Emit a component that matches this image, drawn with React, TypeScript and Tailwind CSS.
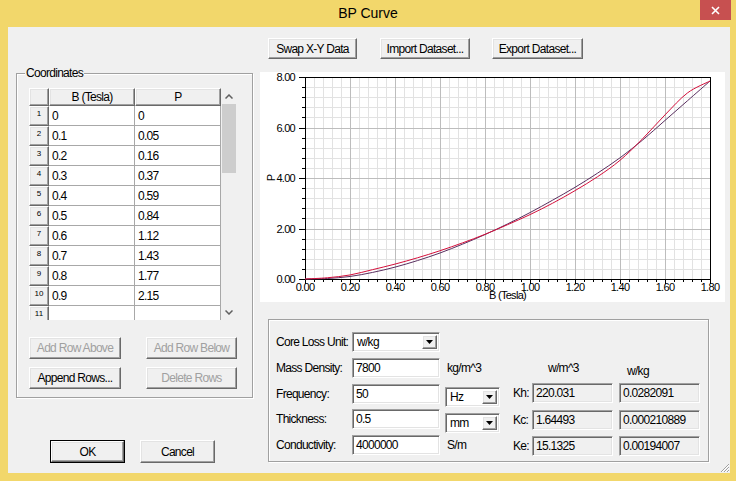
import React from "react";

const raised =
  "border border-t-white border-l-white border-r-[#696969] border-b-[#696969] shadow-[inset_-1px_-1px_0_#a0a0a0,inset_1px_1px_0_#e3e3e3]";
const sunken =
  "border border-t-[#a0a0a0] border-l-[#a0a0a0] border-r-white border-b-white shadow-[inset_1px_1px_0_#696969,inset_-1px_-1px_0_#e3e3e3]";

const ROWS: [string, string][] = [
  ["0", "0"],
  ["0.1", "0.05"],
  ["0.2", "0.16"],
  ["0.3", "0.37"],
  ["0.4", "0.59"],
  ["0.5", "0.84"],
  ["0.6", "1.12"],
  ["0.7", "1.43"],
  ["0.8", "1.77"],
  ["0.9", "2.15"],
  ["", ""],
];

const DATA = [0, 0.05, 0.16, 0.37, 0.59, 0.84, 1.12, 1.43, 1.77, 2.15, 2.55, 3.0, 3.5, 4.05, 4.7, 5.55, 6.5, 7.37, 7.84];
const FIT = [0, 0.02, 0.1, 0.26, 0.47, 0.73, 1.03, 1.38, 1.76, 2.18, 2.63, 3.12, 3.63, 4.19, 4.8, 5.5, 6.28, 7.06, 7.84];

const Button: React.FC<{ label: string; className: string; disabled?: boolean }> = ({ label, className, disabled }) => (
  <div
    className={`${raised} ${className} flex items-center justify-center bg-[#f0f0f0] ${
      disabled ? "text-[#a0a0a0]" : "text-black"
    }`}
  >
    {label}
  </div>
);

const Select: React.FC<{ value: string; className: string }> = ({ value, className }) => (
  <div className={`${sunken} ${className} bg-white flex items-center p-[2px]`}>
    <span className="flex-1 pl-[2px]">{value}</span>
    <div className={`${raised} w-[15px] h-full bg-[#f0f0f0] flex items-center justify-center`}>
      <svg width="7" height="4" viewBox="0 0 7 4">
        <path d="M0 0h7L3.5 4z" fill="#000" />
      </svg>
    </div>
  </div>
);

const Field: React.FC<{ value: string; className: string; readOnly?: boolean }> = ({ value, className, readOnly }) => (
  <div className={`${sunken} ${className} ${readOnly ? "bg-[#f0f0f0]" : "bg-white"} flex items-center pl-[3px]`}>
    {value}
  </div>
);

function smooth(pts: [number, number][]) {
  let d = `M${pts[0][0]},${pts[0][1]}`;
  for (let i = 0; i < pts.length - 1; i++) {
    const p0 = pts[i - 1] || pts[i];
    const p1 = pts[i];
    const p2 = pts[i + 1];
    const p3 = pts[i + 2] || p2;
    const c1x = p1[0] + (p2[0] - p0[0]) / 6;
    const c1y = p1[1] + (p2[1] - p0[1]) / 6;
    const c2x = p2[0] - (p3[0] - p1[0]) / 6;
    const c2y = p2[1] - (p3[1] - p1[1]) / 6;
    d += ` C${c1x.toFixed(2)},${c1y.toFixed(2)} ${c2x.toFixed(2)},${c2y.toFixed(2)} ${p2[0].toFixed(2)},${p2[1].toFixed(2)}`;
  }
  return d;
}

const Chart: React.FC = () => {
  const L = 45, R = 450, T = 5, B = 207;
  const xs = (b: number) => L + (b / 1.8) * (R - L);
  const ys = (p: number) => B - (p / 8) * (B - T);
  const px = (v: number) => Math.round(v) + 0.5;

  const vMinor: number[] = [];
  const vMajor: number[] = [];
  for (let i = 1; i < 45; i++) (i % 5 === 0 ? vMajor : vMinor).push(px(xs(i * 0.04)));
  const hMinor: number[] = [];
  const hMajor: number[] = [];
  for (let j = 1; j < 20; j++) (j % 5 === 0 ? hMajor : hMinor).push(px(ys(j * 0.4)));

  const red = smooth(DATA.map((p, i) => [xs(i * 0.1), ys(p)]));
  const fit = smooth(FIT.map((p, i) => [xs(i * 0.1), ys(p)]));

  return (
    <svg width="465" height="230" viewBox="0 0 465 230" fontFamily="'Liberation Sans', Arial, sans-serif" fontSize="11">
      <g shapeRendering="crispEdges">
        {vMinor.map((x) => (
          <line key={`vm${x}`} x1={x} x2={x} y1={T} y2={B} stroke="#e2e2e2" />
        ))}
        {hMinor.map((y) => (
          <line key={`hm${y}`} x1={L} x2={R} y1={y} y2={y} stroke="#e2e2e2" />
        ))}
        {vMajor.map((x) => (
          <line key={`vM${x}`} x1={x} x2={x} y1={T} y2={B} stroke="#bdbdbd" />
        ))}
        {hMajor.map((y) => (
          <line key={`hM${y}`} x1={L} x2={R} y1={y} y2={y} stroke="#bdbdbd" />
        ))}
        {Array.from({ length: 21 }, (_, j) => {
          const y = px(ys(j * 0.4));
          return <line key={`yt${j}`} x1={j % 5 === 0 ? L - 6 : L - 3} x2={L} y1={y} y2={y} stroke="#000" />;
        })}
        {Array.from({ length: 46 }, (_, i) => {
          const x = px(xs(i * 0.04));
          return <line key={`xt${i}`} x1={x} x2={x} y1={B} y2={i % 5 === 0 ? B + 5 : B + 3} stroke="#000" />;
        })}
        <rect x={L + 0.5} y={T + 0.5} width={R - L} height={B - T} fill="none" stroke="#000" />
      </g>
      <path d={fit} fill="none" stroke="#5a3060" strokeWidth="1" />
      <path d={red} fill="none" stroke="#d4103c" strokeWidth="1" />
      {[0, 2, 4, 6, 8].map((p) => (
        <text key={`yl${p}`} x={35} y={ys(p) + 4} textAnchor="end" fill="#000">
          {p.toFixed(2)}
        </text>
      ))}
      {Array.from({ length: 10 }, (_, i) => (
        <text key={`xl${i}`} x={xs(i * 0.2)} y={219} textAnchor="middle" fill="#000">
          {(i * 0.2).toFixed(2)}
        </text>
      ))}
      <text x={(L + R) / 2} y={227} textAnchor="middle" fill="#000">
        B (Tesla)
      </text>
      <text x={15} y={(T + B) / 2} textAnchor="middle" fill="#000" transform={`rotate(-90 15 ${(T + B) / 2})`}>
        P
      </text>
    </svg>
  );
};

export default function App() {
  return (
    <div className="w-[736px] h-[481px] bg-[#f2d76b] flex flex-col overflow-hidden font-['Liberation_Sans',Arial,sans-serif] text-[12px] tracking-[-0.7px] text-black">
      {/* Title bar */}
      <div className="h-[27px] relative flex items-center justify-center">
        <span className="text-[14px] tracking-normal">BP Curve</span>
        <div className="absolute right-[5px] top-0 w-[31px] h-[20px] bg-[#c75050] flex items-center justify-center">
          <svg width="9" height="9" viewBox="0 0 9 9">
            <path d="M1 1L8 8M8 1L1 8" stroke="#fff" strokeWidth="1.6" />
          </svg>
        </div>
      </div>

      <div className="flex-1 flex pl-[8px] pr-[6px] pb-[8px]">
        <div className="flex-1 bg-[#f0f0f0] flex relative">
          {/* Left column */}
          <div className="ml-[8px] w-[237px] flex flex-col">
            <div className="relative mt-[46px] h-[325px] border border-[#a0a0a0] shadow-[inset_1px_1px_0_#fff,1px_1px_0_#fff] pl-[12px] pt-[14px]">
              <span className="absolute -top-[8px] left-[8px] bg-[#f0f0f0] px-[1px] leading-[14px]">Coordinates</span>

              {/* Grid */}
              <div className="flex w-[208px] h-[232px]">
                <div className="w-[192px] h-[232px] overflow-hidden">
                  <div className="flex h-[18px]">
                    <div className={`${raised} w-[20px] h-full bg-[#f0f0f0]`} />
                    <div className={`${raised} w-[86px] h-full bg-[#f0f0f0] flex items-center justify-center`}>B (Tesla)</div>
                    <div className={`${raised} w-[86px] h-full bg-[#f0f0f0] flex items-center justify-center`}>P</div>
                  </div>
                  {ROWS.map(([b, p], i) => (
                    <div key={i} className="flex h-[20px] shrink-0">
                      <div className={`${raised} w-[20px] h-full bg-[#f0f0f0] flex justify-center pt-[3px] text-[8px] tracking-normal leading-[8px]`}>
                        {i + 1}
                      </div>
                      <div className="w-[86px] h-full bg-white border-b border-r border-[#a8a8a8] flex items-center pl-[3px]">{b}</div>
                      <div className="w-[86px] h-full bg-white border-b border-r border-[#a8a8a8] flex items-center pl-[3px]">{p}</div>
                    </div>
                  ))}
                </div>
                <div className="w-[16px] h-[232px] bg-[#f0f0f0] flex flex-col">
                  <div className="h-[16px] flex items-center justify-center">
                    <svg width="8" height="5" viewBox="0 0 8 5">
                      <path d="M0.5 4.5L4 1L7.5 4.5" fill="none" stroke="#606060" strokeWidth="1.5" />
                    </svg>
                  </div>
                  <div className="flex-1">
                    <div className="h-[69px] mx-[1px] bg-[#cdcdcd]" />
                  </div>
                  <div className="h-[16px] flex items-center justify-center">
                    <svg width="8" height="5" viewBox="0 0 8 5">
                      <path d="M0.5 0.5L4 4L7.5 0.5" fill="none" stroke="#606060" strokeWidth="1.5" />
                    </svg>
                  </div>
                </div>
              </div>

              <div className="mt-[17px] flex">
                <Button label="Add Row Above" className="w-[92px] h-[22px]" disabled />
                <Button label="Add Row Below" className="ml-[25px] w-[91px] h-[22px]" disabled />
              </div>
              <div className="mt-[8px] flex">
                <Button label="Append Rows..." className="w-[92px] h-[22px]" />
                <Button label="Delete Rows" className="ml-[25px] w-[91px] h-[22px]" disabled />
              </div>
            </div>

            <div className="mt-[42px] ml-[34px] flex">
              <div className="w-[75px] h-[23px] border border-black">
                <Button label="OK" className="w-full h-full" />
              </div>
              <Button label="Cancel" className="ml-[15px] w-[75px] h-[23px]" />
            </div>
          </div>

          {/* Right column */}
          <div className="ml-[7px] w-[465px] flex flex-col">
            <div className="mt-[11px] ml-[8px] flex">
              <Button label="Swap X-Y Data" className="w-[89px] h-[21px]" />
              <Button label="Import Dataset..." className="ml-[23px] w-[90px] h-[21px]" />
              <Button label="Export Dataset..." className="ml-[22px] w-[91px] h-[21px]" />
            </div>

            <div className="mt-[13px] h-[230px] bg-white">
              <Chart />
            </div>

            <div className="mt-[17px] ml-[8px] w-[441px] h-[143px] border border-[#a0a0a0] shadow-[inset_1px_1px_0_#fff,1px_1px_0_#fff] flex">
              {/* Inputs */}
              <div className="ml-[7px] mt-[12px] w-[224px] flex flex-col">
                <div className="flex items-center h-[20px]">
                  <span className="w-[76px]">Core Loss Unit:</span>
                  <Select value="w/kg" className="w-[88px] h-[20px]" />
                </div>
                <div className="mt-[6px] flex items-center h-[20px]">
                  <span className="w-[76px]">Mass Density:</span>
                  <Field value="7800" className="w-[88px] h-[20px]" />
                  <span className="ml-[7px]">kg/m^3</span>
                </div>
                <div className="mt-[6px] flex items-start h-[20px]">
                  <span className="w-[76px] self-center">Frequency:</span>
                  <Field value="50" className="w-[88px] h-[20px]" />
                  <Select value="Hz" className="ml-[5px] mt-[3px] w-[55px] h-[20px]" />
                </div>
                <div className="mt-[5px] flex items-start h-[20px]">
                  <span className="w-[76px] self-center">Thickness:</span>
                  <Field value="0.5" className="w-[88px] h-[20px]" />
                  <Select value="mm" className="ml-[5px] mt-[4px] w-[55px] h-[20px]" />
                </div>
                <div className="mt-[6px] flex items-center h-[20px]">
                  <span className="w-[76px]">Conductivity:</span>
                  <Field value="4000000" className="w-[88px] h-[20px]" />
                  <span className="ml-[7px]">S/m</span>
                </div>
              </div>

              {/* Coefficients */}
              <div className="ml-[13px] mt-[41px] flex flex-col">
                <div className="flex h-[14px] leading-[14px]">
                  <span className="ml-[35px] w-[79px]">w/m^3</span>
                  <span className="mt-[3px]">w/kg</span>
                </div>
                <div className="mt-[8px] flex items-center h-[20px]">
                  <span className="w-[19px]">Kh:</span>
                  <Field value="220.031" className="w-[81px] h-full" readOnly />
                  <Field value="0.0282091" className="ml-[6px] w-[81px] h-full" readOnly />
                </div>
                <div className="mt-[7px] flex items-center h-[20px]">
                  <span className="w-[19px]">Kc:</span>
                  <Field value="1.64493" className="w-[81px] h-full" readOnly />
                  <Field value="0.000210889" className="ml-[6px] w-[81px] h-full" readOnly />
                </div>
                <div className="mt-[6px] flex items-center h-[20px]">
                  <span className="w-[19px]">Ke:</span>
                  <Field value="15.1325" className="w-[81px] h-full" readOnly />
                  <Field value="0.00194007" className="ml-[6px] w-[81px] h-full" readOnly />
                </div>
              </div>
            </div>
          </div>

          {/* Resize grip */}
          <svg className="absolute right-0 bottom-0" width="11" height="11" viewBox="0 0 11 11">
            <path d="M10 2L2 10M10 5L5 10M10 8L8 10" stroke="#a0a0a0" strokeWidth="1" />
            <path d="M10 3L3 10M10 6L6 10M10 9L9 10" stroke="#fff" strokeWidth="1" />
          </svg>
        </div>
      </div>
    </div>
  );
}
